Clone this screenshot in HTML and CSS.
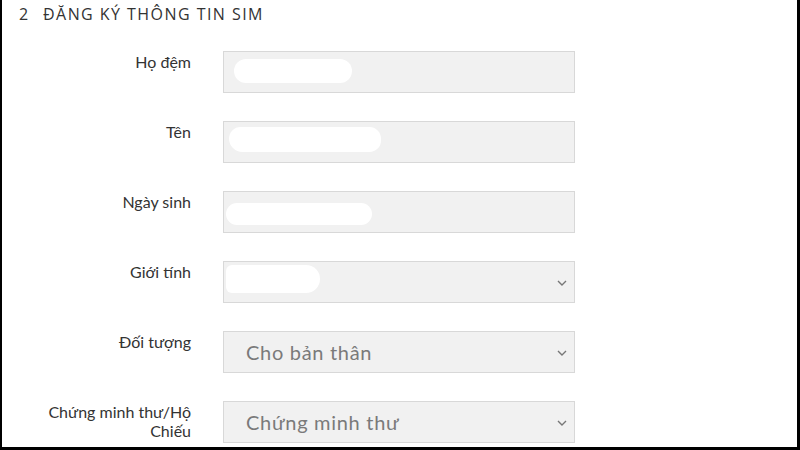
FILE: index.html
```html
<!DOCTYPE html>
<html lang="vi">
<head>
<meta charset="utf-8">
<link rel="stylesheet" href="styles.css">
</head>
<body>
<div class="frame">
  <h2 class="section-title"><span class="num">2</span>ĐĂNG KÝ THÔNG TIN SIM</h2>
  <div class="form">
    <div class="row">
      <label class="label">Họ đệm</label>
      <div class="field"><span class="blur b1"></span></div>
    </div>
    <div class="row">
      <label class="label">Tên</label>
      <div class="field"><span class="blur b2"></span></div>
    </div>
    <div class="row">
      <label class="label">Ngày sinh</label>
      <div class="field"><span class="blur b3"></span></div>
    </div>
    <div class="row">
      <label class="label">Giới tính</label>
      <div class="field select"><span class="blur b4"></span>
        <svg class="chev" width="10" height="6" viewBox="0 0 10 6"><path d="M1 1l4 4 4-4" fill="none" stroke="#777" stroke-width="1.4"/></svg>
      </div>
    </div>
    <div class="row">
      <label class="label">Đối tượng</label>
      <div class="field select"><span class="value">Cho bản thân</span>
        <svg class="chev" width="10" height="6" viewBox="0 0 10 6"><path d="M1 1l4 4 4-4" fill="none" stroke="#777" stroke-width="1.4"/></svg>
      </div>
    </div>
    <div class="row">
      <label class="label">Chứng minh thư/Hộ Chiếu</label>
      <div class="field select"><span class="value">Chứng minh thư</span>
        <svg class="chev" width="10" height="6" viewBox="0 0 10 6"><path d="M1 1l4 4 4-4" fill="none" stroke="#777" stroke-width="1.4"/></svg>
      </div>
    </div>
  </div>
</div>
</body>
</html>
```

FILE: styles.css
```css
html, body {
  margin: 0;
  padding: 0;
  background: #fff;
}
.frame {
  box-sizing: border-box;
  width: 800px;
  height: 450px;
  border-left: 2px solid #000;
  border-right: 3px solid #000;
  border-bottom: 3px solid #000;
  overflow: hidden;
}
.section-title {
  margin: 0;
  padding: 3px 0 0 17px;
  font-family: "Open Sans", sans-serif;
  font-weight: 400;
  font-size: 16px;
  line-height: 22px;
  letter-spacing: 1.45px;
  color: #333;
  display: flex;
}
.section-title .num {
  width: 24px;
  letter-spacing: 0;
}
.form {
  display: flex;
  flex-direction: column;
  gap: 28px;
  padding-top: 26px;
}
.row {
  display: grid;
  grid-template-columns: 152px 352px;
  column-gap: 32px;
  padding-left: 37px;
  align-items: start;
}
.label {
  font-family: "Lato", sans-serif;
  font-size: 16px;
  line-height: 19px;
  color: #333;
  text-align: right;
  margin-top: 1px;
}
.field {
  position: relative;
  box-sizing: border-box;
  height: 42px;
  background: #f1f1f1;
  border: 1px solid #d8d8d8;
  display: flex;
  align-items: center;
  padding: 0 22px;
}
.value {
  font-family: "Lato", sans-serif;
  font-weight: 400;
  font-size: 20px;
  letter-spacing: 0.7px;
  color: #7a7a7a;
}
.chev {
  position: absolute;
  right: 7px;
  top: 18px;
}
.blur {
  position: absolute;
  background: #fff;
  border-radius: 12px;
}
.b1 { left: 10px; top: 7px; width: 118px; height: 24px; }
.b2 { left: 5px; top: 5px; width: 152px; height: 25px; border-radius: 12px 12px 12px 14px; }
.b3 { left: 2px; top: 11px; width: 146px; height: 22px; }
.b4 { left: 2px; top: 3px; width: 94px; height: 28px; border-radius: 6px 14px 14px 6px; }
```
